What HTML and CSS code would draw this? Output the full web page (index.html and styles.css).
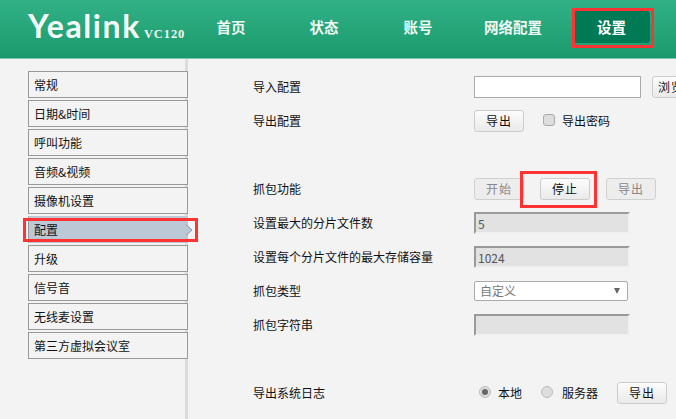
FILE: index.html
```html
<!DOCTYPE html>
<html lang="zh">
<head>
<meta charset="utf-8">
<title>Yealink VC120</title>
<link rel="stylesheet" href="styles.css">
</head>
<body>
<header class="topbar">
  <div class="logo"><span class="brand">Yealink</span><span class="model">VC120</span></div>
  <nav class="nav">
    <a class="nav-item n1">首页</a>
    <a class="nav-item n2">状态</a>
    <a class="nav-item n3">账号</a>
    <a class="nav-item n4">网络配置</a>
    <a class="nav-item n5 active">设置</a>
  </nav>
</header>
<div class="content">
  <aside class="side">
    <ul class="menu">
      <li class="menu-item">常规</li>
      <li class="menu-item">日期&amp;时间</li>
      <li class="menu-item">呼叫功能</li>
      <li class="menu-item">音频&amp;视频</li>
      <li class="menu-item">摄像机设置</li>
      <li class="menu-item selected">配置<svg class="chev" width="7" height="12" viewBox="0 0 7 12"><path d="M0 0.5 L6 6 L0 11.5" fill="#bcc8d6" stroke="#8f9bb0" stroke-width="1"/></svg></li>
      <li class="menu-item">升级</li>
      <li class="menu-item">信号音</li>
      <li class="menu-item">无线麦设置</li>
      <li class="menu-item">第三方虚拟会议室</li>
    </ul>
  </aside>
  <main class="form">
    <div class="row r-import"><label class="lab">导入配置</label><div class="ctl"><input class="file" type="text"><button class="btn browse">浏览</button></div></div>
    <div class="row r-export"><label class="lab">导出配置</label><div class="ctl"><button class="btn">导出</button><span class="check"></span><span class="opt">导出密码</span></div></div>
    <div class="row r-cap"><label class="lab">抓包功能</label><div class="ctl"><button class="btn off">开始</button><button class="btn stop">停止</button><button class="btn off last">导出</button></div></div>
    <div class="row r-std"><label class="lab">设置最大的分片文件数</label><div class="ctl"><div class="ro">5</div></div></div>
    <div class="row r-std"><label class="lab">设置每个分片文件的最大存储容量</label><div class="ctl"><div class="ro">1024</div></div></div>
    <div class="row r-sel"><label class="lab">抓包类型</label><div class="ctl"><div class="select"><span>自定义</span><i class="arrow"></i></div></div></div>
    <div class="row r-str"><label class="lab">抓包字符串</label><div class="ctl"><div class="ro"></div></div></div>
    <div class="row r-log"><label class="lab">导出系统日志</label><div class="ctl radios"><span class="radio on"></span><span class="opt local">本地</span><span class="radio"></span><span class="opt server">服务器</span><button class="btn">导出</button></div></div>
  </main>
</div>
<div class="mark m-nav"></div>
<div class="mark m-side"></div>
<div class="mark m-stop"></div>
</body>
</html>
```
FILE: styles.css
```css
* { box-sizing: border-box; }
html, body { margin: 0; padding: 0; }
body {
  width: 676px;
  height: 419px;
  overflow: hidden;
  background: #f3f3f3;
  color: #111;
  font: 12px/16px "Noto Sans CJK SC", "Liberation Sans", sans-serif;
  position: relative;
}
.topbar {
  height: 59px;
  display: flex;
  background: linear-gradient(#32b187, #1a9a6c);
  border-bottom: 1px solid #7fc9ae;
  color: #eef8f4;
}
.logo { width: 216px; padding: 6px 0 0 28px; white-space: nowrap; }
.brand { font: 700 32px/40px Lato, sans-serif; color: #f4faf7; letter-spacing: 1.6px; }
.model { font: bold 12.5px/14px "Liberation Serif", serif; margin-left: 3px; letter-spacing: 0.9px; }
.nav { display: flex; flex: 1; }
.nav-item { font-size: 14.5px; font-weight: 700; line-height: 20px; padding-top: 17px; text-align: center; }
.n1 { width: 30px; }
.n2 { width: 30px; margin-left: 63px; }
.n3 { width: 30px; margin-left: 64px; }
.n4 { width: 58px; margin-left: 51px; }
.n5 {
  width: 77px; height: 32px; margin: 11px 0 0 31px; padding-top: 6px;
  background: #007a55; border-radius: 3px; color: #fff;
}
.content { display: flex; height: 360px; }
.side {
  width: 188px; padding: 12px 0 0 28px;
  border-right: 3px solid #dcdcdc;
  height: 360px;
  flex: none;
}
.menu { list-style: none; margin: 0; padding: 0; width: 160px; }
.menu-item {
  height: 27px; margin-bottom: 2px; padding-left: 5px; line-height: 26px;
  border: 1px solid #999; background: #f3f3f3; position: relative;
}
.selected { background: #bcc8d6; border-color: #bcc8d6 #bcc8d6 #bcc8d6 #999; }
.chev { position: absolute; right: -6px; top: 7px; }
.form { flex: 1; padding: 0 0 0 66px; position: relative; }
.row { display: flex; align-items: center; height: 34px; }
.lab { width: 220px; flex: none; margin-left: -1px; padding-right: 0; }
.ctl { display: flex; align-items: center; margin-left: 1px; }
.r-import { margin-top: 11px; height: 34px; }
.r-export { height: 34px; }
.r-cap { margin-top: 34px; }
.r-sel { height: 33px; }
.r-str { height: 35px; }
.r-log { margin-top: 34px; }
.file { width: 167px; height: 22px; border: 1px solid #aaa; background: #fff; padding: 0; margin-right: 11px; flex: none; }
.btn {
  width: 50px; height: 22px; padding: 0; border: 1px solid #ccc; border-radius: 3px;
  background: linear-gradient(#fcfcfc, #eaeaea); font: inherit; color: #111; letter-spacing: 1px; flex: none;
}
.browse { width: 38px; }
.off { background: #ededed; border-color: #d0d0d0; color: #888; }
.stop { margin-left: 16px; }
.last { margin-left: 16px; }
.check {
  width: 12px; height: 12px; border: 1px solid #aaa; border-radius: 3px; background: #ddd; margin: -3px 7px 0 19px;
}
.ro {
  width: 156px; height: 22px; background: #e2e2e2; padding-left: 2px; line-height: 20px;
  border-top: 2px solid #9a9a9a; border-left: 2px solid #9a9a9a; border-right: 2px solid #f0f0f0; border-bottom: 2px solid #f0f0f0;
  color: #555;
}
.select {
  width: 154px; height: 20px; border: 1px solid #aaa; border-radius: 2px; background: #fff;
  color: #777; padding-left: 5px; line-height: 18px; position: relative;
}
.arrow {
  position: absolute; right: 7px; top: 6px; width: 0; height: 0;
  border-left: 3px solid transparent; border-right: 3px solid transparent; border-top: 6px solid #666;
}
.radios { padding-left: 5px; }
.radio { width: 12px; height: 12px; border: 1px solid #bbb; border-radius: 50%; background: #ddd; margin-top: -3px; position: relative; }
.radio.on::after { content: ""; position: absolute; left: 2px; top: 2px; width: 6px; height: 6px; border-radius: 50%; background: #666; }
.local { margin: 0 19px 0 7px; }
.server { margin: 0 19px 0 9px; }
.mark { position: absolute; border: 3px solid #f33; }
.m-nav { left: 572px; top: 8px; width: 82px; height: 40px; }
.m-side { left: 23px; top: 218px; width: 175px; height: 24px; }
.m-stop { left: 520px; top: 171px; width: 77px; height: 37px; }
```
